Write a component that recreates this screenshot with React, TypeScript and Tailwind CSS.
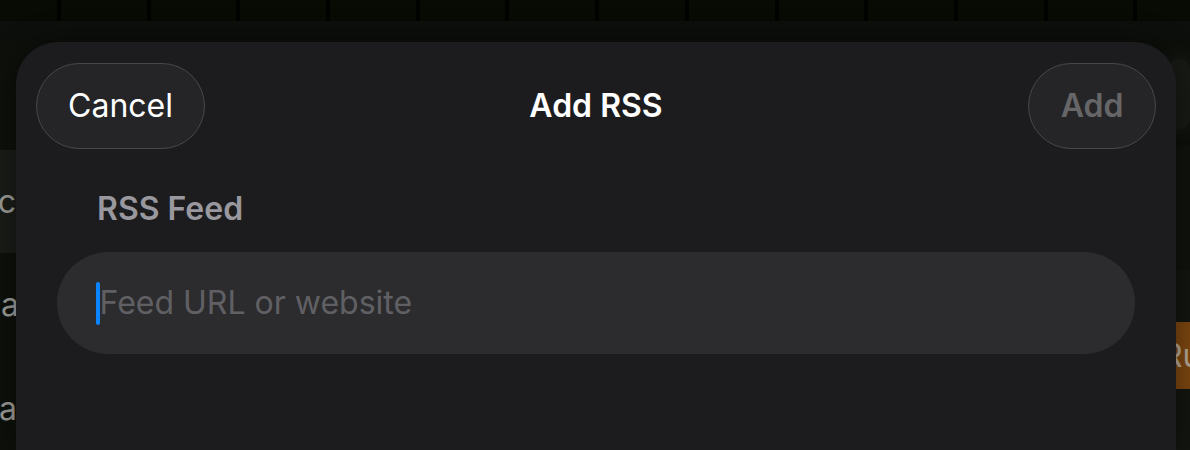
import React from "react";

const font = { fontFamily: "Inter, 'Noto Sans', sans-serif" };

function TopStrip() {
  // the tab-ish strip of the app behind the sheet
  const cells = Array.from({ length: 13 });
  return (
    <div className="flex h-[21px] shrink-0 bg-[#080b04]">
      <div className="w-[57px] shrink-0" />
      {cells.map((_, i) => (
        <React.Fragment key={i}>
          <div className="w-[4px] shrink-0 bg-[#020301]" />
          <div className="w-[85.7px] shrink-0" />
        </React.Fragment>
      ))}
    </div>
  );
}

function Background() {
  return (
    <div className="flex h-full flex-col bg-[#0d100b]">
      <TopStrip />
      <div className="h-[21px] shrink-0 bg-[#0c0f0b]" />
      <div className="flex min-h-0 flex-1 overflow-hidden">
        {/* left list behind the sheet */}
        <div className="flex w-[120px] shrink-0 flex-col text-[32px] text-[#9a9b97]">
          <div className="h-[108px] shrink-0" />
          <div className="flex h-[103px] shrink-0 items-center justify-end bg-[#1a1c18] pr-[104px]">Tec</div>
          <div className="flex h-[104px] shrink-0 items-center justify-end pr-[101px]">Qua</div>
          <div className="flex h-[104px] shrink-0 items-center justify-end pr-[103px]">Pla</div>
        </div>
        <div className="flex-1" />
        {/* right column behind the sheet */}
        <div className="flex w-[80px] shrink-0 flex-col">
          <div className="flex h-[103px] shrink-0 items-center pl-[58px]">
            <div className="h-[70px] w-[70px] rounded-full bg-[#171a15] shadow-[0_0_20px_rgba(40,45,38,0.6)]" />
          </div>
          <div className="h-[125px] shrink-0 bg-[#0f120d]" />
          <div className="h-[52px] shrink-0 bg-[#121510]" />
          <div className="flex h-[67px] shrink-0 items-center justify-end bg-[#7a4510] text-[32px] text-[#b3a593]">
            <span className="w-[28px] overflow-hidden">Ru</span>
          </div>
          <div className="flex-1 bg-[#121510]" />
        </div>
      </div>
    </div>
  );
}

export default function App() {
  return (
    <div className="relative h-[450px] w-[1190px] overflow-hidden bg-[#0c0f0b]" style={font}>
      <Background />

      {/* Add RSS sheet */}
      <div className="absolute bottom-0 left-[16px] top-[42px] w-[1160px] rounded-t-[42px] bg-[#1c1c1e] shadow-[0_0_30px_rgba(0,0,0,0.4)]">
        <div className="grid grid-cols-[1fr_auto_1fr] items-center px-[20px] pt-[21px]">
          <div className="flex">
            <button className="flex h-[86px] w-[169px] items-center justify-center rounded-full border border-[#48484a] bg-[#252527] text-[32px] text-white">
              Cancel
            </button>
          </div>
          <div className="text-[32px] font-semibold text-white">Add RSS</div>
          <div className="flex justify-end">
            <button className="flex h-[86px] w-[128px] items-center justify-center rounded-full border border-[#48484a] bg-[#252527] text-[32px] font-semibold text-[#666668]">
              Add
            </button>
          </div>
        </div>

        <div className="pl-[81px] pt-[40px] text-[32px] font-semibold leading-[40px] text-[#98989e]">RSS Feed</div>

        <div className="mx-[41px] mt-[23px] flex h-[102px] items-center rounded-full bg-[#2c2c2e] pl-[39px]">
          <div className="h-[43px] w-[3.5px] rounded-full bg-[#0a84ff]" />
          <span className="text-[32px] text-[#606064]">Feed URL or website</span>
        </div>
      </div>
    </div>
  );
}
